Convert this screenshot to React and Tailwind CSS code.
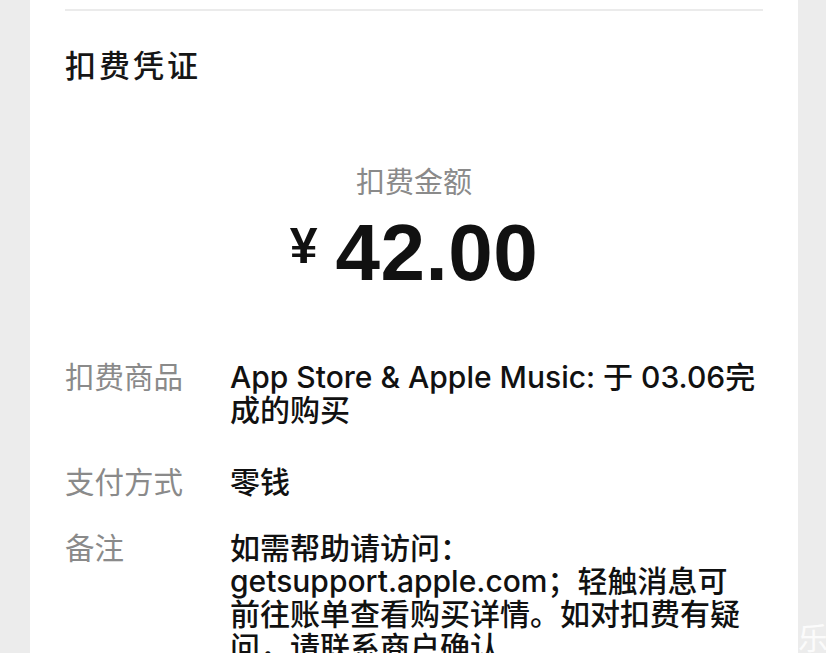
import React from 'react';

const rows = [
  { label: '扣费商品', lines: ['App Store & Apple Music: 于 03.06完', '成的购买'], extra: 'mb-[6px]' },
  { label: '支付方式', lines: ['零钱'] },
  {
    label: '备注',
    lines: [
      '如需帮助请访问：',
      'getsupport.apple.com；轻触消息可',
      '前往账单查看购买详情。如对扣费有疑',
      '问，请联系商户确认',
    ],
  },
];

export default function App() {
  return (
    <div className="relative h-[653px] overflow-hidden bg-[#ececec] font-['Liberation_Sans','Noto_Sans_CJK_SC',sans-serif]">
      <div className="ml-[30px] h-full w-[768px] bg-white px-[35px]">
        <div className="h-[11px] border-b-[2px] border-[#ebebeb]" />

        <h1 className="mt-[36px] text-[31px] leading-[40px] tracking-[3px] font-medium text-[#161616]">扣费凭证</h1>

        <div className="mt-[78px] flex flex-col items-center">
          <p className="text-[29px] leading-[36px] text-[#8a8a8a]">扣费金额</p>
          <div className="mt-[12px] flex items-center gap-[18px] text-[#111]">
            <span className="-mt-[14px] text-[50px] leading-none font-bold">¥</span>
            <span className="text-[80px] leading-[80px] font-bold tracking-[0.5px]">42.00</span>
          </div>
        </div>

        <div className="mt-[68px] flex flex-col gap-[33px]">
          {rows.map((row) => (
            <div key={row.label} className={`grid grid-cols-[165px_1fr] leading-[33px] ${row.extra || ''}`}>
              <span className="text-[29.5px] text-[#8a8a8a]">{row.label}</span>
              <div className="font-['Inter','Noto_Sans_CJK_SC',sans-serif] text-[30px] font-medium text-[#111]">
                {row.lines.map((line) => (
                  <div key={line} className="whitespace-nowrap">{line}</div>
                ))}
              </div>
            </div>
          ))}
        </div>
      </div>

      <span className="absolute left-[798px] top-[616px] text-[30px] text-white/80">乐</span>
    </div>
  );
}
